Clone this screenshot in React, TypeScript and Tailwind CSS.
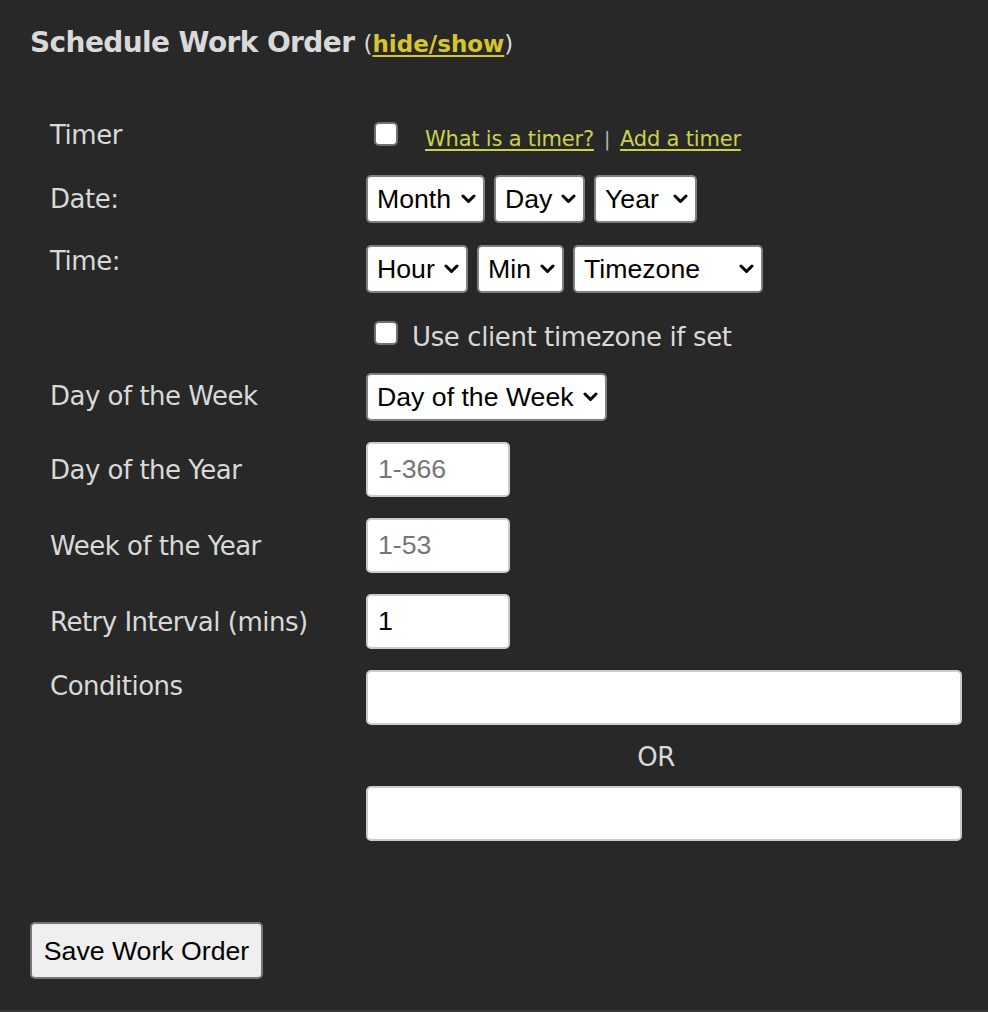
import React from "react";

const LABEL_FONT = { fontFamily: '"DejaVu Sans", Verdana, sans-serif' };
const CTRL_FONT = { fontFamily: '"Liberation Sans", Arial, sans-serif' };

function Chevron() {
  return (
    <svg width="15" height="10" viewBox="0 0 15 10" className="shrink-0">
      <path d="M2 2 L7.5 7.5 L13 2" stroke="#000" strokeWidth="3" fill="none" strokeLinecap="round" strokeLinejoin="round" />
    </svg>
  );
}

function Sel({ label, className }: { label: string; className: string }) {
  return (
    <div
      style={CTRL_FONT}
      className={
        "h-[48px] rounded-[5px] border-2 border-[#808080] bg-white flex items-center justify-between pl-[9px] pr-[7px] text-[26.67px] text-black " +
        className
      }
    >
      <span>{label}</span>
      <Chevron />
    </div>
  );
}

function Label({ children, className }: { children: React.ReactNode; className: string }) {
  return (
    <div className={"w-[316px] shrink-0 text-[26px] leading-[30px] tracking-[-0.5px] text-[#d9d9d9] " + className}>
      {children}
    </div>
  );
}

function Box() {
  return (
    <input
      type="checkbox"
      className="appearance-none w-[24px] h-[24px] rounded-[5px] border-2 border-[#707070] bg-white shrink-0 block"
    />
  );
}

export default function App() {
  return (
    <div className="min-h-[1012px] bg-[#383838]" style={LABEL_FONT}>
      <div className="h-[1010px] bg-[#282828] px-[26px] pt-[26px]">
        <h2 className="pl-[4px] h-[34px] leading-[34px] text-[28px] font-bold tracking-[-0.6px] text-[#d9d9d9]">
          Schedule Work Order{" "}
          <span className="font-normal text-[23px] tracking-normal">
            (
            <a className="font-bold text-[#d6c62e] underline decoration-2 underline-offset-[3px] cursor-pointer">
              hide/show
            </a>
            )
          </span>
        </h2>

        <div className="pl-[24px] mt-[59px]">
          {/* Timer */}
          <div className="flex h-[30px]">
            <Label className="mt-[1px]">Timer</Label>
            <div className="flex items-start">
              <div className="ml-[8px] mt-[3px]">
                <Box />
              </div>
              <div className="ml-[27px] mt-[7px] text-[21px] leading-[26px] tracking-[-0.2px] flex items-baseline">
                <a className="text-[#cbd24a] underline decoration-2 underline-offset-[3px] cursor-pointer">What is a timer?</a>
                <span className="mx-[10px] text-[#b5b5b5] text-[19px]">|</span>
                <a className="text-[#cbd24a] underline decoration-2 underline-offset-[3px] cursor-pointer">Add a timer</a>
              </div>
            </div>
          </div>

          {/* Date */}
          <div className="flex mt-[26px]">
            <Label className="mt-[9px]">Date:</Label>
            <div className="flex gap-[9px]">
              <Sel label="Month" className="w-[119px]" />
              <Sel label="Day" className="w-[91px]" />
              <Sel label="Year" className="w-[103px]" />
            </div>
          </div>

          {/* Time */}
          <div className="flex mt-[22px]">
            <Label className="mt-[1px]">Time:</Label>
            <div className="flex flex-col">
              <div className="flex gap-[9px]">
                <Sel label="Hour" className="w-[102px]" />
                <Sel label="Min" className="w-[87px]" />
                <Sel label="Timezone" className="w-[190px]" />
              </div>
              <div className="flex items-start mt-[28px]">
                <div className="ml-[8px]">
                  <Box />
                </div>
                <span className="ml-[14px] mt-[1px] text-[26px] leading-[30px] tracking-[-0.4px] text-[#d9d9d9]">
                  Use client timezone if set
                </span>
              </div>
            </div>
          </div>

          {/* Day of the week */}
          <div className="flex mt-[21px]">
            <Label className="mt-[8px]">Day of the Week</Label>
            <Sel label="Day of the Week" className="w-[241px]" />
          </div>

          {/* Day of year */}
          <div className="flex mt-[21px]">
            <Label className="mt-[13px]">Day of the Year</Label>
            <input
              placeholder="1-366"
              style={CTRL_FONT}
              className="w-[144px] h-[55px] rounded-[5px] border-2 border-[#cccccc] bg-white px-[10px] text-[26.67px] text-black placeholder:text-[#757575] outline-none"
            />
          </div>

          {/* Week of year */}
          <div className="flex mt-[21px]">
            <Label className="mt-[13px]">Week of the Year</Label>
            <input
              placeholder="1-53"
              style={CTRL_FONT}
              className="w-[144px] h-[55px] rounded-[5px] border-2 border-[#cccccc] bg-white px-[10px] text-[26.67px] text-black placeholder:text-[#757575] outline-none"
            />
          </div>

          {/* Retry */}
          <div className="flex mt-[21px]">
            <Label className="mt-[13px]">Retry Interval (mins)</Label>
            <input
              defaultValue="1"
              style={CTRL_FONT}
              className="w-[144px] h-[55px] rounded-[5px] border-2 border-[#cccccc] bg-white px-[10px] text-[26.67px] text-black outline-none"
            />
          </div>

          {/* Conditions */}
          <div className="flex mt-[21px]">
            <Label className="mt-[1px]">Conditions</Label>
            <div className="flex flex-col w-[596px] shrink-0">
              <input
                style={CTRL_FONT}
                className="w-full h-[55px] rounded-[5px] border-2 border-[#cccccc] bg-white px-[10px] text-[26.67px] text-black outline-none"
              />
              <div className="mt-[17px] text-center pr-[16px] text-[26px] leading-[30px] tracking-[-0.5px] text-[#d9d9d9]">
                OR
              </div>
              <input
                style={CTRL_FONT}
                className="mt-[14px] w-full h-[55px] rounded-[5px] border-2 border-[#cccccc] bg-white px-[10px] text-[26.67px] text-black outline-none"
              />
            </div>
          </div>
        </div>

        <button
          style={CTRL_FONT}
          className="ml-[4px] mt-[81px] w-[233px] h-[57px] rounded-[5px] border-2 border-[#767676] bg-[#efefef] text-[26.67px] text-black flex items-center justify-center"
        >
          Save Work Order
        </button>
      </div>
    </div>
  );
}
